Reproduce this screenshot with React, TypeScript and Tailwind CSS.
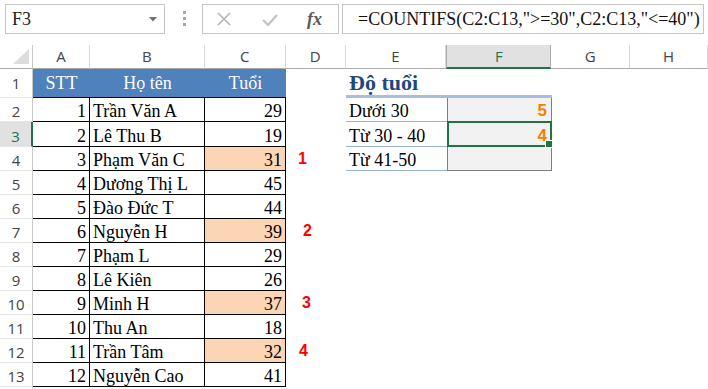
import React from "react";

const serif = "font-['Liberation_Serif','Times_New_Roman',serif]";
const uiSans = "font-['Open_Sans','Liberation_Sans',sans-serif]";

type R = { stt: number; name: string; age: number; hl?: boolean; red?: string; redCls?: string };

const data: R[] = [
  { stt: 1, name: "Trần Văn A", age: 29 },
  { stt: 2, name: "Lê Thu B", age: 19 },
  { stt: 3, name: "Phạm Văn C", age: 31, hl: true, red: "1", redCls: "pl-[12px]" },
  { stt: 4, name: "Dương Thị L", age: 45 },
  { stt: 5, name: "Đào Đức T", age: 44 },
  { stt: 6, name: "Nguyễn H", age: 39, hl: true, red: "2", redCls: "pl-[17px]" },
  { stt: 7, name: "Phạm L", age: 29 },
  { stt: 8, name: "Lê Kiên", age: 26 },
  { stt: 9, name: "Minh H", age: 37, hl: true, red: "3", redCls: "pl-[16px]" },
  { stt: 10, name: "Thu An", age: 18 },
  { stt: 11, name: "Trần Tâm", age: 32, hl: true, red: "4", redCls: "pl-[13px]" },
  { stt: 12, name: "Nguyễn Cao", age: 41 },
];

const heights = ["h-[24px]", "h-[25px]", "h-[24px]", "h-[24px]", "h-[24px]", "h-[24px]", "h-[24px]", "h-[24px]", "h-[24px]", "h-[24px]", "h-[24px]", "h-[24px]"];

const side: Record<number, { label: string; val?: string }> = {
  2: { label: "Dưới 30", val: "5" },
  3: { label: "Từ 30 - 40", val: "4" },
  4: { label: "Từ 41-50" },
};

function ColHeader({ label, w, active }: { label: string; w: string; active?: boolean }) {
  return (
    <div
      className={`${w} h-full flex items-center justify-center text-[15px] ${uiSans} ${
        active
          ? "bg-[#e1e1e1] text-[#217346] border-l border-r border-[#ababab] border-b-2 border-b-[#217346]"
          : "text-[#444] border-r border-[#d8d8d8] border-b border-b-[#ababab]"
      }`}
    >
      {label}
    </div>
  );
}

export default function App() {
  return (
    <div className="w-[708px] h-[389px] overflow-hidden bg-white text-black">
      {/* Formula bar */}
      <div className="h-[45px] flex items-start pt-[4px]">
        <div className="ml-[5px] w-[160px] h-[30px] border border-[#c6c6c6] flex items-center justify-between">
          <span className={`pl-[6px] text-[18px] ${serif} text-[#222]`}>F3</span>
          <svg width="8" height="5" viewBox="0 0 8 5" className="mr-[7px]">
            <polygon points="0,0 8,0 4,4.5" fill="#6f6f6f" />
          </svg>
        </div>
        <div className="ml-[18px] mt-[7px] flex flex-col gap-[3px]">
          <div className="w-[3px] h-[3px] bg-[#a8a8a8]" />
          <div className="w-[3px] h-[3px] bg-[#a8a8a8]" />
          <div className="w-[3px] h-[3px] bg-[#a8a8a8]" />
        </div>
        <div className="ml-[16px] w-[137px] h-[30px] border border-[#c6c6c6] flex items-center pl-[14px]">
          <svg width="14" height="14" viewBox="0 0 14 14">
            <path d="M1 1 L13 13 M13 1 L1 13" stroke="#b5b5b5" strokeWidth="1.6" fill="none" />
          </svg>
          <svg width="16" height="12" viewBox="0 0 16 12" className="ml-[31px] mt-[2px]">
            <path d="M1 6 L6 11 L15 1" stroke="#c2c2c2" strokeWidth="2.2" fill="none" />
          </svg>
          <span className={`ml-[29px] italic font-bold text-[18px] ${serif} text-[#5a5a5a]`}>fx</span>
        </div>
        <div className="ml-[3px] w-[362px] h-[30px] border border-[#c6c6c6] flex items-center pl-[15px]">
          <span className={`text-[18px] ${serif} text-[#111] whitespace-nowrap`}>
            {'=COUNTIFS(C2:C13,">=30",C2:C13,"<=40")'}
          </span>
        </div>
      </div>

      {/* Column headers */}
      <div className="h-[24px] flex">
        <div className="w-[33px] h-full border-r border-[#c8c8c8] border-b border-b-[#ababab] relative">
          <svg width="33" height="23" viewBox="0 0 33 23" className="absolute left-0 top-0">
            <polygon points="29,4 29,19 13,19" fill="#dcdcdc" />
          </svg>
        </div>
        <ColHeader label="A" w="w-[57px]" />
        <ColHeader label="B" w="w-[115px]" />
        <ColHeader label="C" w="w-[81px]" />
        <ColHeader label="D" w="w-[60px]" />
        <ColHeader label="E" w="w-[101px]" />
        <ColHeader label="F" w="w-[105px]" active />
        <ColHeader label="G" w="w-[79px]" />
        <ColHeader label="H" w="w-[78px]" />
      </div>

      {/* Row 1 */}
      <div className="h-[29px] flex">
        <div className={`w-[33px] h-full border-r border-[#c8c8c8] border-b border-b-[#e6e6e6] flex items-center justify-center text-[15px] text-[#444] ${uiSans}`}>
          1
        </div>
        <div className={`w-[57px] h-full bg-[#4f81bd] border-b border-black flex items-center justify-center text-white text-[18px] ${serif}`}>STT</div>
        <div className={`w-[115px] h-full bg-[#4f81bd] border-b border-black flex items-center justify-center text-white text-[18px] ${serif}`}>Họ tên</div>
        <div className={`w-[81px] h-full bg-[#4f81bd] border-b border-black flex items-center justify-center text-white text-[18px] ${serif}`}>Tuổi</div>
        <div className="w-[60px] h-full" />
        <div className={`w-[101px] h-full border-b-[3px] border-[#a7bfde] flex items-end pl-[3px] leading-[24px] text-[22px] font-bold text-[#1f497d] ${serif}`}>
          Độ tuổi
        </div>
        <div className="w-[105px] h-full border-b-[3px] border-[#a7bfde]" />
      </div>

      {/* Data rows */}
      {data.map((r, i) => {
        const rowNo = i + 2;
        const s = side[rowNo];
        const sel = rowNo === 3;
        return (
          <div key={rowNo} className={`${heights[i]} flex`}>
            <div
              className={`w-[33px] h-full flex items-end justify-center leading-[20px] text-[15px] ${uiSans} border-b border-b-[#e6e6e6] ${
                sel ? "bg-[#e1e1e1] text-[#217346] border-r-2 border-r-[#217346]" : "text-[#444] border-r border-r-[#c8c8c8]"
              }`}
            >
              {rowNo}
            </div>
            <div className={`w-[57px] h-full border-r border-b border-black flex items-end justify-end pr-[3px] leading-[20px] text-[18px] ${serif}`}>
              {r.stt}
            </div>
            <div className={`w-[115px] h-full border-r border-b border-black flex items-end pl-[3px] leading-[20px] text-[18px] whitespace-nowrap ${serif}`}>
              {r.name}
            </div>
            <div
              className={`w-[81px] h-full border-r border-b border-black flex items-end justify-end pr-[3px] leading-[20px] text-[18px] ${serif} ${
                r.hl ? "bg-[#fcd5b4]" : ""
              }`}
            >
              {r.age}
            </div>
            <div className={`w-[60px] h-full flex items-center ${r.redCls ?? ""}`}>
              {r.red && (
                <span className="text-[16px] font-bold text-[#ff0000] font-['Liberation_Sans',Arial,sans-serif]">{r.red}</span>
              )}
            </div>
            <div
              className={`w-[101px] h-full flex items-end pl-[3px] leading-[20px] text-[18px] whitespace-nowrap ${serif} ${
                s ? "border-b border-[#95b3d7]" : ""
              }`}
            >
              {s?.label}
            </div>
            <div
              className={`relative w-[105px] h-full flex items-end justify-end pr-[4px] leading-[20px] text-[17px] font-bold text-[#fa7d00] font-['Liberation_Sans',Arial,sans-serif] ${
                s ? "bg-[#f2f2f2] border-l border-r border-b border-[#7f7f7f]" : ""
              }`}
            >
              {s?.val}
              {sel && (
                <div className="absolute -left-[1px] -top-[1px] -right-[1px] -bottom-[1px] border-2 border-[#217346] z-10">
                  <div className="absolute -right-[3px] -bottom-[3px] w-[6px] h-[6px] bg-[#217346] border border-white box-content" />
                </div>
              )}
            </div>
          </div>
        );
      })}

      {/* Row 14 partial */}
      <div className="h-[10px] flex">
        <div className="w-[33px] h-full border-r border-[#c8c8c8]" />
      </div>
    </div>
  );
}
